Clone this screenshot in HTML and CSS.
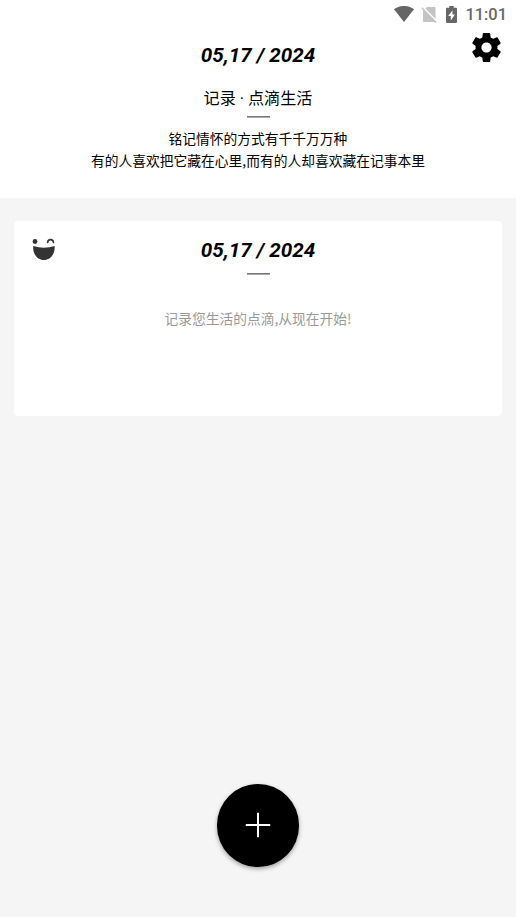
FILE: index.html
```html
<!DOCTYPE html>
<html lang="zh-CN">
<head>
<meta charset="utf-8">
<title>点滴生活</title>
<link rel="stylesheet" href="styles.css">
</head>
<body>
<div class="app">
  <header class="header">
    <div class="status">
      <svg class="wifi" width="20" height="16" viewBox="0 0 20 16"><path d="M0 3.200C5.600-1.100 14.400-1.100 20 3.200L10 16z"/></svg>
      <svg class="nosim" width="16" height="17" viewBox="0 0 16 17"><path d="M6 1h7.500q1 0 1 1v10.700L4.300 2.600zM1.300 1.300L.3 2.300 2 4v11q0 1 1 1h10.400l1.300 1 .9-1z"/></svg>
      <svg class="battery" width="11" height="17" viewBox="0 0 11 17"><path fill-rule="evenodd" d="M3.300 0h4.400v1.700H10q1 0 1 1V16q0 1-1 1H1q-1 0-1-1V2.700q0-1 1-1h2.300zM6.500 4.200L2.200 10H4.800v4.500L8.900 8.500H6.500z"/></svg>
      <span class="clock">11:01</span>
    </div>
    <button class="settings" aria-label="设置">
      <svg width="35" height="35" viewBox="0 0 24 24"><path d="M19.430 12.980c.04-.32.07-.64.07-.98s-.03-.66-.07-.98l2.110-1.650c.19-.15.24-.42.12-.64l-2-3.460c-.12-.22-.39-.3-.61-.22l-2.490 1c-.52-.4-1.080-.73-1.690-.98l-.38-2.650C14.460 2.180 14.250 2 14 2h-4c-.25 0-.46.18-.49.42l-.38 2.650c-.61.25-1.170.59-1.690.98l-2.490-1c-.23-.09-.49 0-.61.22l-2 3.460c-.13.22-.07.49.12.64l2.110 1.650c-.04.32-.07.65-.07.98s.03.66.07.98l-2.110 1.650c-.19.15-.24.42-.12.64l2 3.460c.12.22.39.3.61.22l2.490-1c.52.4 1.080.73 1.690.98l.38 2.650c.03.24.24.42.49.42h4c.25 0 .46-.18.49-.42l.38-2.650c.61-.25 1.170-.59 1.690-.98l2.490 1c.23.09.49 0 .61-.22l2-3.460c.12-.22.07-.49-.12-.64l-2.110-1.650zM12 15.500c-1.930 0-3.500-1.570-3.500-3.500s1.570-3.500 3.500-3.500 3.500 1.570 3.500 3.500-1.570 3.500-3.500 3.500z"/></svg>
    </button>
    <h1 class="date">05,17 / 2024</h1>
    <h2 class="title">记录 · 点滴生活</h2>
    <div class="rule"></div>
    <p class="motto">铭记情怀的方式有千千万万种<br>有的人喜欢把它藏在心里,而有的人却喜欢藏在记事本里</p>
  </header>
  <main class="content">
    <article class="card">
      <svg class="mood" width="24" height="24" viewBox="0 0 24 24"><circle cx="3" cy="4.500" r="2.400"/><path class="wink" d="M15.700 5.300C15.900 1.700 21.200 1.700 21.400 5.300"/><path d="M1.200 9.100Q12 12.300 22.600 9.100C23.200 17 18.500 23 11.900 23S.6 17 1.200 9.100z"/></svg>
      <h3 class="date">05,17 / 2024</h3>
      <div class="rule"></div>
      <p class="hint">记录您生活的点滴,从现在开始!</p>
    </article>
  </main>
  <footer class="actions">
    <button class="add" aria-label="添加">
      <svg width="26" height="26" viewBox="0 0 26 26"><path d="M13 .8v24.400M.8 13h24.400"/></svg>
    </button>
  </footer>
</div>
</body>
</html>
```
FILE: styles.css
```css
* {
  box-sizing: border-box;
  margin: 0;
  padding: 0;
}

body {
  background: #f5f5f5;
  color: #000;
  font-family: Roboto, "Noto Sans CJK SC", sans-serif;
}

button {
  border: 0;
  background: none;
}

svg {
  display: block;
}

.app {
  display: flex;
  flex-direction: column;
  height: 917px;
}

.header {
  position: relative;
  height: 198px;
  background: #fff;
  text-align: center;
}

.status {
  display: flex;
  justify-content: flex-end;
  align-items: center;
  height: 28px;
  padding-right: 9px;
  fill: #666;
}

.nosim {
  margin-left: 7px;
  fill: #c4c4c4;
}

.battery {
  margin-left: 9px;
}

.clock {
  margin-left: 8px;
  padding-top: 2px;
  color: #666;
  font-size: 16.400px;
  font-weight: 500;
  line-height: 26px;
}

.settings {
  position: absolute;
  top: 30px;
  right: 12.500px;
}

.date {
  font-size: 20.650px;
  font-style: italic;
  font-weight: 700;
  line-height: 24px;
  text-align: center;
}

.header .date {
  margin-top: 15px;
}

.title {
  margin-top: 20px;
  font-size: 16.100px;
  font-weight: 400;
  line-height: 24px;
}

.rule {
  width: 23px;
  height: 2px;
  margin: 5px auto 0;
  background: linear-gradient(#777 50%, #aaa 50%);
}

.motto,
.hint {
  font-family: "Noto Sans CJK SC", sans-serif;
  font-size: 13.760px;
  line-height: 22px;
}

.motto {
  margin-top: 9px;
}

.content {
  flex: 1;
  padding: 23px 14px 0;
}

.card {
  position: relative;
  height: 195px;
  padding-top: 17px;
  border-radius: 4px;
  background: #fff;
}

.card .rule {
  margin-top: 11px;
}

.mood {
  position: absolute;
  top: 16px;
  left: 18px;
  fill: #333;
}

.wink {
  fill: none;
  stroke: #333;
  stroke-width: 1.700;
  stroke-linecap: round;
}

.hint {
  margin-top: 32px;
  color: #999;
  text-align: center;
}

.actions {
  display: flex;
  justify-content: center;
  padding-bottom: 50.500px;
}

.add {
  display: grid;
  place-items: center;
  width: 82.500px;
  height: 82.500px;
  border-radius: 50%;
  background: #000;
  box-shadow: 0 2px 4px rgba(0, 0, 0, 0.35);
}

.add path {
  fill: none;
  stroke: #fff;
  stroke-width: 2;
}
```
